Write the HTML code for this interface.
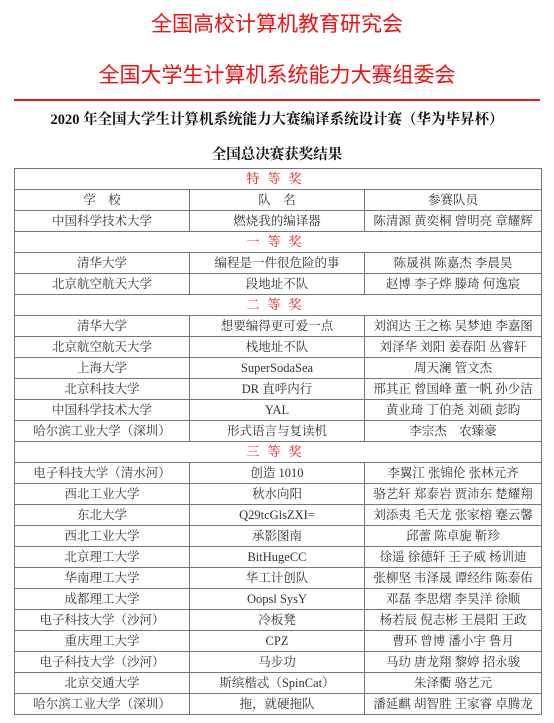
<!DOCTYPE html>
<html><head><meta charset="utf-8"><style>
body{margin:0;background:#fff;width:554px;height:723px;overflow:hidden;font-family:"Liberation Serif","Noto Serif CJK SC",serif;}
.t1{position:absolute;left:0;width:554px;text-align:center;color:#f01010;font-family:"Liberation Sans","Noto Sans CJK SC",sans-serif;font-size:21px;line-height:30px;}
.rule{position:absolute;left:14px;top:99px;width:526px;height:2px;background:#e81818;}
.sub{position:absolute;left:0;width:554px;text-align:center;font-weight:bold;font-size:14.5px;color:#111;}
table{position:absolute;left:14px;top:168px;width:527px;border-collapse:collapse;table-layout:fixed;}
td{border:1px solid #777;height:20px;padding:0;text-align:center;font-size:12.5px;color:#333;line-height:20px;white-space:nowrap;overflow:hidden;}
td.aw{color:#f01010;font-size:13px;letter-spacing:8px;}
</style></head><body>
<div class="t1" style="top:10px">全国高校计算机教育研究会</div>
<div class="t1" style="top:61px">全国大学生计算机系统能力大赛组委会</div>
<div class="rule"></div>
<div class="sub" style="top:108px">2020 年全国大学生计算机系统能力大赛编译系统设计赛（华为毕昇杯）</div>
<div class="sub" style="top:143px">全国总决赛获奖结果</div>
<table>
<colgroup><col style="width:175px"><col style="width:175px"><col style="width:177px"></colgroup>
<tr><td colspan="3" class="aw">特等奖</td></tr>
<tr><td>学　校</td><td>队　名</td><td>参赛队员</td></tr>
<tr><td>中国科学技术大学</td><td>燃烧我的编译器</td><td>陈清源 黄奕桐 曾明亮 章耀辉</td></tr>
<tr><td colspan="3" class="aw">一等奖</td></tr>
<tr><td>清华大学</td><td>编程是一件很危险的事</td><td>陈晟祺 陈嘉杰 李晨昊</td></tr>
<tr><td>北京航空航天大学</td><td>段地址不队</td><td>赵博 李子烨 滕琦 何逸宸</td></tr>
<tr><td colspan="3" class="aw">二等奖</td></tr>
<tr><td>清华大学</td><td>想要编得更可爱一点</td><td>刘润达 王之栋 吴梦迪 李嘉图</td></tr>
<tr><td>北京航空航天大学</td><td>栈地址不队</td><td>刘泽华 刘阳 姜春阳 丛睿轩</td></tr>
<tr><td>上海大学</td><td>SuperSodaSea</td><td>周天澜 管文杰</td></tr>
<tr><td>北京科技大学</td><td>DR 直呼内行</td><td>邢其正 曾国峰 董一帆 孙少洁</td></tr>
<tr><td>中国科学技术大学</td><td>YAL</td><td>黄业琦 丁伯尧 刘硕 彭昀</td></tr>
<tr><td>哈尔滨工业大学（深圳）</td><td>形式语言与复读机</td><td>李宗杰　农臻豪</td></tr>
<tr><td colspan="3" class="aw">三等奖</td></tr>
<tr><td>电子科技大学（清水河）</td><td>创造 1010</td><td>李翼江 张锦伦 张林元齐</td></tr>
<tr><td>西北工业大学</td><td>秋水向阳</td><td>骆艺轩 郑泰岩 贾沛东 楚耀翔</td></tr>
<tr><td>东北大学</td><td>Q29tcGlsZXI=</td><td>刘添夷 毛天龙 张家榕 蹇云馨</td></tr>
<tr><td>西北工业大学</td><td>承影图南</td><td>邱蕾 陈卓旎 靳珍</td></tr>
<tr><td>北京理工大学</td><td>BitHugeCC</td><td>徐遥 徐德轩 王子威 杨训迪</td></tr>
<tr><td>华南理工大学</td><td>华工计创队</td><td>张柳坚 韦泽晟 谭经纬 陈泰佑</td></tr>
<tr><td>成都理工大学</td><td>Oopsl SysY</td><td>邓磊 李思熠 李昊洋 徐顺</td></tr>
<tr><td>电子科技大学（沙河）</td><td>冷板凳</td><td>杨若辰 倪志彬 王晨阳 王政</td></tr>
<tr><td>重庆理工大学</td><td>CPZ</td><td>曹环 曾博 潘小宇 鲁月</td></tr>
<tr><td>电子科技大学（沙河）</td><td>马步功</td><td>马玏 唐龙翔 黎婷 招永骏</td></tr>
<tr><td>北京交通大学</td><td>斯缤楷忒（SpinCat）</td><td>朱泽衢 骆艺元</td></tr>
<tr><td>哈尔滨工业大学（深圳）</td><td>拖，就硬拖队</td><td>潘延麒 胡智胜 王家睿 卓腾龙</td></tr>
</table>
</body></html>
